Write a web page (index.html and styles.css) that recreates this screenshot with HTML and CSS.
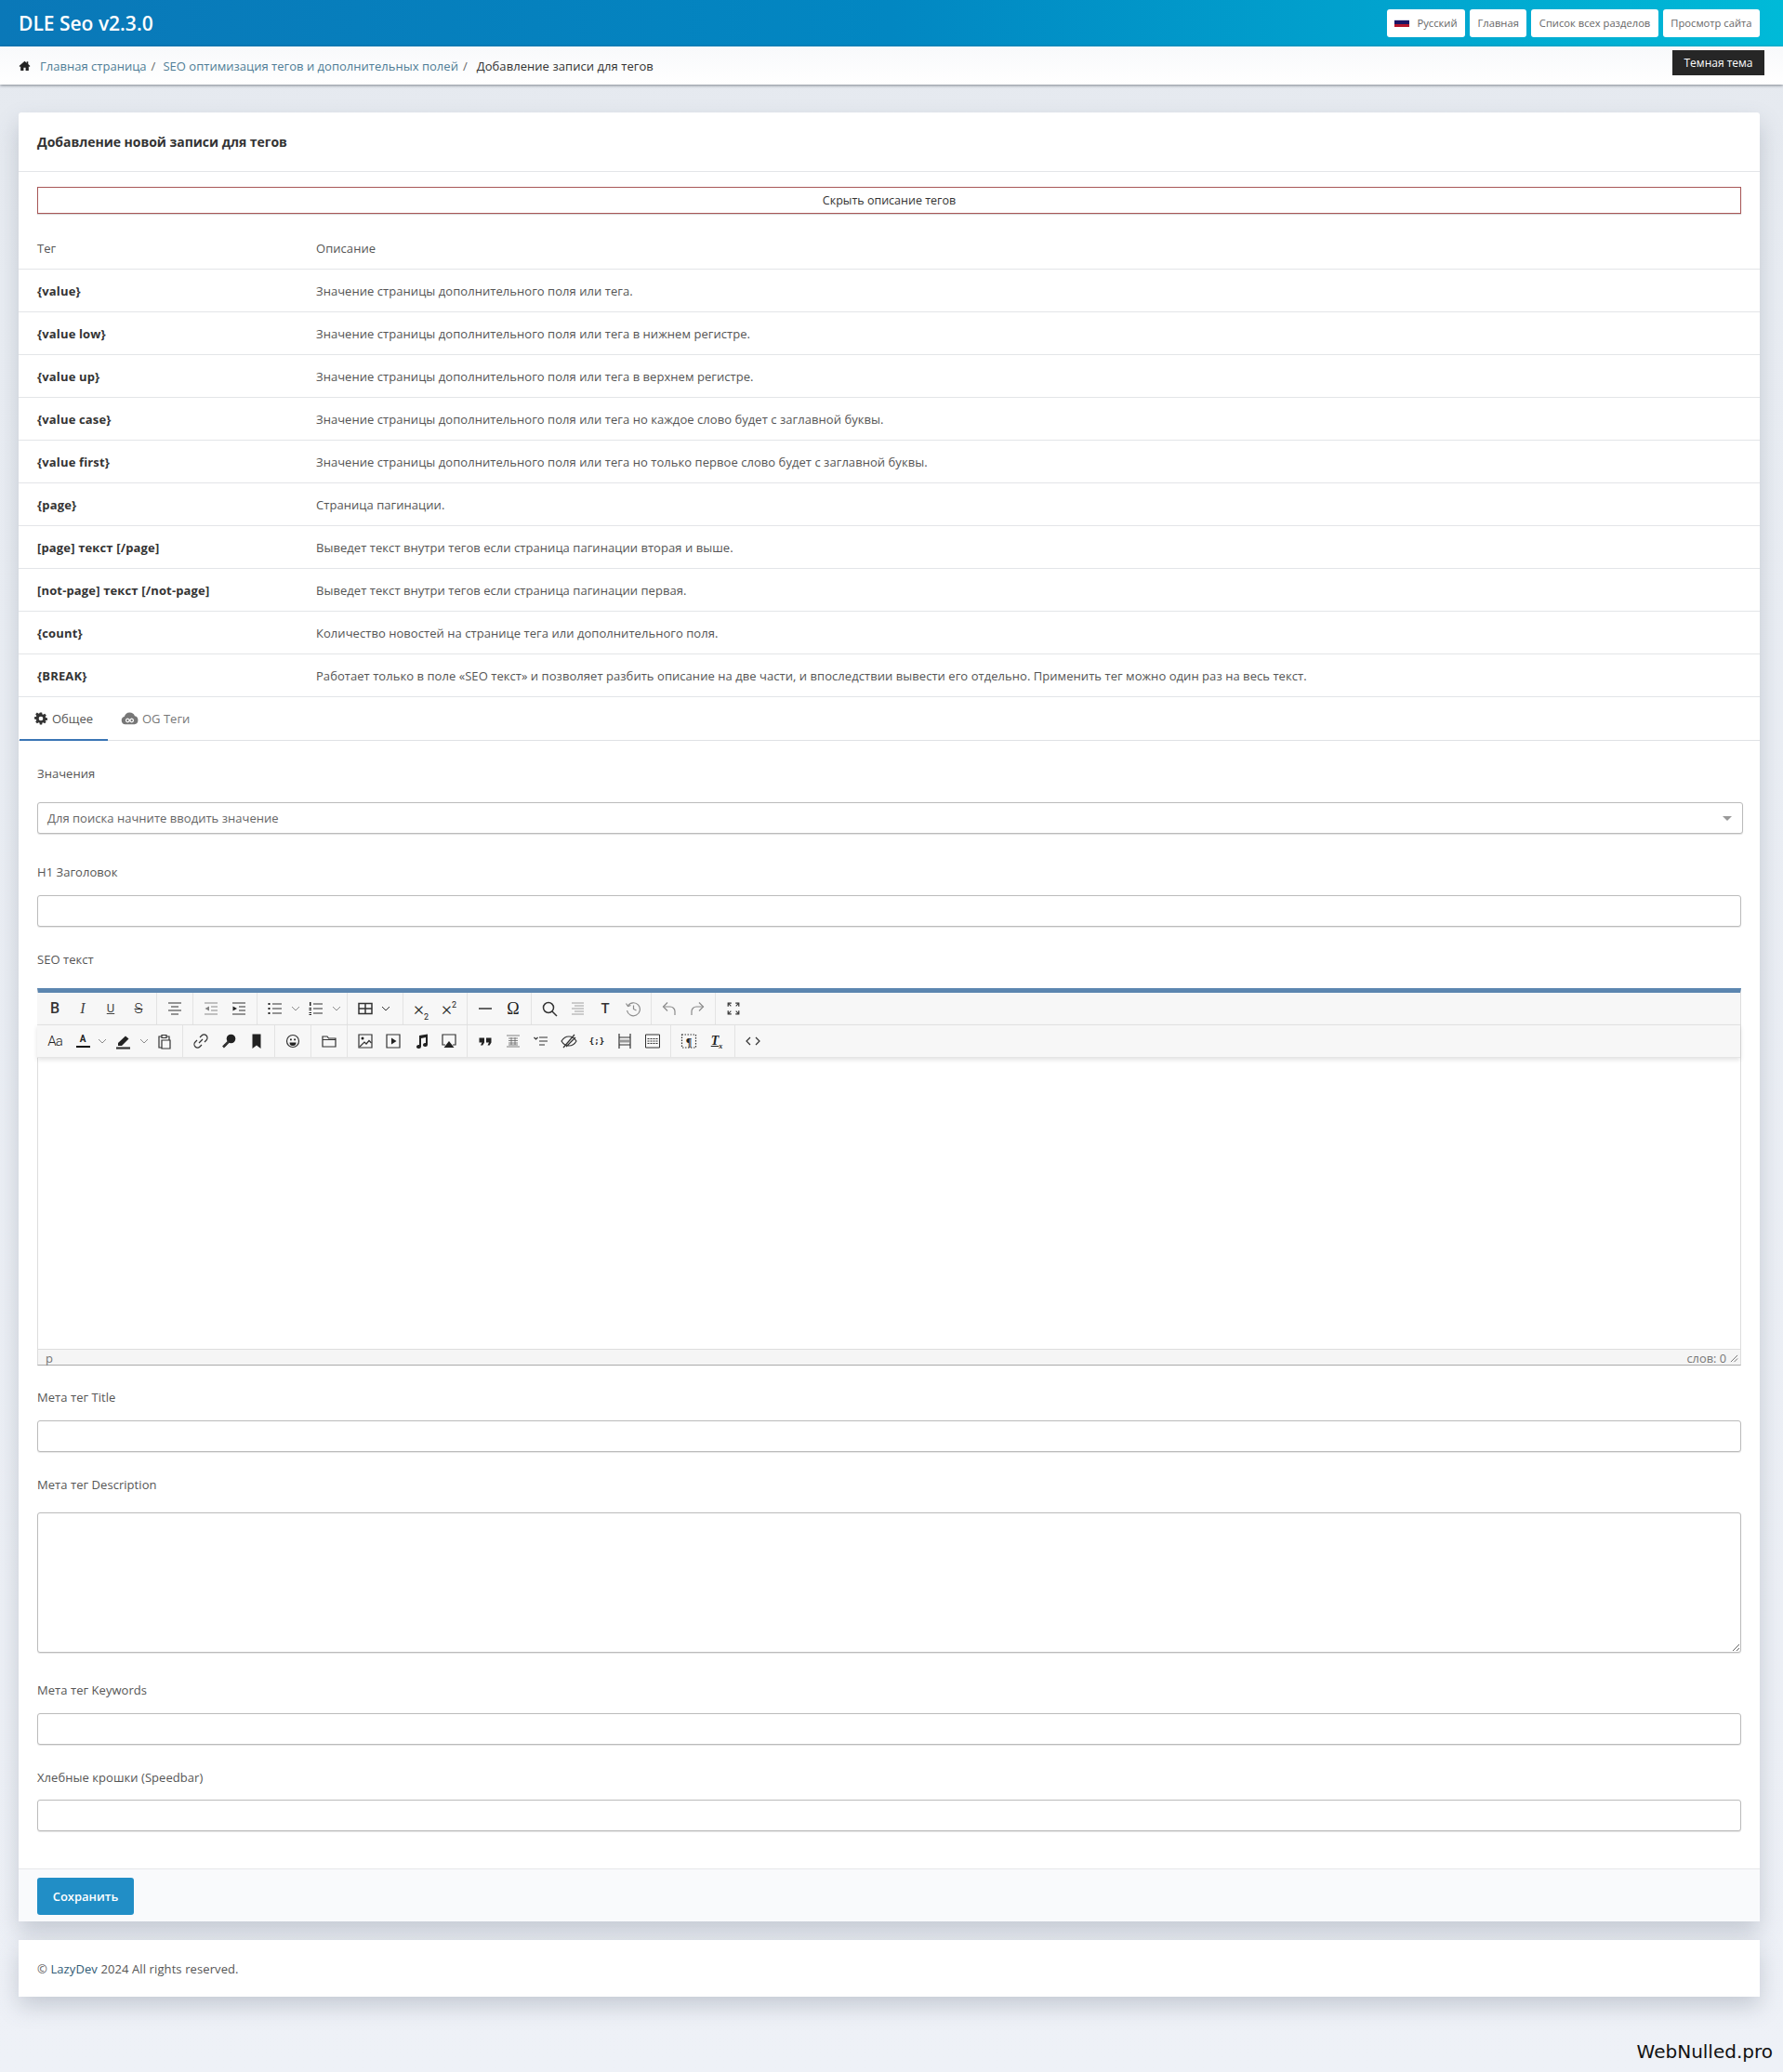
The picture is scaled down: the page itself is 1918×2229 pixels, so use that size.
FILE: index.html
```html
<!DOCTYPE html>
<html lang="ru">
<head>
<meta charset="utf-8">
<title>DLE Seo v2.3.0</title>
<link rel="stylesheet" href="styles.css">
</head>
<body>
<header class="topbar">
  <div class="brand">DLE Seo v2.3.0</div>
  <nav class="topnav">
    <a class="navbtn navlang"><svg class="flag" viewBox="0 0 16 8"><rect width="16" height="8" fill="#1b1464"/><rect width="16" height="1" fill="#d8d8e8"/><rect y="5" width="16" height="3" fill="#b5152b"/></svg><span>Русский</span></a>
    <a class="navbtn">Главная</a>
    <a class="navbtn">Список всех разделов</a>
    <a class="navbtn">Просмотр сайта</a>
  </nav>
</header>
<div class="crumbs">
  <div class="crumblist">
    <svg class="homeicon" viewBox="0 0 24 24"><path d="M12 3 1 13l1.600 1.700L4 13.500V22h6v-6h4v6h6v-8.500l1.400 1.200L23 13l-4-3.600V4h-3v2.700z" fill="#222"/></svg>
    <a class="crumblink">Главная страница</a><span class="slash">/</span>
    <a class="crumblink">SEO оптимизация тегов и дополнительных полей</a><span class="slash">/</span>
    <span class="crumbnow">Добавление записи для тегов</span>
  </div>
  <a class="darkbtn">Темная тема</a>
</div>

<main class="page">
  <section class="card">
    <h1 class="cardtitle">Добавление новой записи для тегов</h1>
    <div class="togglewrap"><button class="togglebtn">Скрыть описание тегов</button></div>
    <div class="tagtable">
      <div class="tagrow taghead"><div class="tagname">Тег</div><div>Описание</div></div>
      <div class="tagrow"><div class="tagname"><b>{value}</b></div><div>Значение страницы дополнительного поля или тега.</div></div>
      <div class="tagrow"><div class="tagname"><b>{value low}</b></div><div>Значение страницы дополнительного поля или тега в нижнем регистре.</div></div>
      <div class="tagrow"><div class="tagname"><b>{value up}</b></div><div>Значение страницы дополнительного поля или тега в верхнем регистре.</div></div>
      <div class="tagrow"><div class="tagname"><b>{value case}</b></div><div>Значение страницы дополнительного поля или тега но каждое слово будет с заглавной буквы.</div></div>
      <div class="tagrow"><div class="tagname"><b>{value first}</b></div><div>Значение страницы дополнительного поля или тега но только первое слово будет с заглавной буквы.</div></div>
      <div class="tagrow"><div class="tagname"><b>{page}</b></div><div>Страница пагинации.</div></div>
      <div class="tagrow"><div class="tagname"><b>[page] текст [/page]</b></div><div>Выведет текст внутри тегов если страница пагинации вторая и выше.</div></div>
      <div class="tagrow"><div class="tagname"><b>[not-page] текст [/not-page]</b></div><div>Выведет текст внутри тегов если страница пагинации первая.</div></div>
      <div class="tagrow"><div class="tagname"><b>{count}</b></div><div>Количество новостей на странице тега или дополнительного поля.</div></div>
      <div class="tagrow"><div class="tagname"><b>{BREAK}</b></div><div>Работает только в поле «SEO текст» и позволяет разбить описание на две части, и впоследствии вывести его отдельно. Применить тег можно один раз на весь текст.</div></div>
    </div>

    <div class="tabs">
      <a class="tab tabactive"><svg class="tabicon" viewBox="0 0 24 24"><path fill="#333" fill-rule="evenodd" d="M10 1h4l.6 3.200 1.700.7L19 3l3 3-1.900 2.700.7 1.700 3.200.6v4l-3.200.6-.7 1.700L22 18l-3 3-2.700-1.900-1.700.7L14 23h-4l-.6-3.200-1.700-.7L5 21l-3-3 1.900-2.700-.7-1.700L0 13V9l3.200-.6.700-1.700L2 4 5 1l2.700 1.900 1.700-.7zM12 8a4 4 0 1 0 0 8 4 4 0 0 0 0-8z"/></svg>Общее</a>
      <a class="tab"><svg class="tabicon tabicon-wide" viewBox="0 0 24 18"><path fill="#777" d="M6 17A5.500 5.500 0 0 1 4.800 6.200 7.500 7.500 0 0 1 19 5.600 5.800 5.800 0 0 1 18.500 17z"/><path fill="none" stroke="#fff" stroke-width="1.500" d="M11.500 11.500a2.300 2.300 0 1 0 0 .1zm5.600 0a2.300 2.300 0 1 0 0 .1z"/></svg>OG Теги</a>
    </div>

    <form class="formbody">
      <div class="field">
        <label class="label">Значения</label>
        <div class="selectbox"><span>Для поиска начните вводить значение</span><i class="caret"></i></div>
      </div>
      <div class="field field-h1">
        <label class="label">H1 Заголовок</label>
        <input class="input" type="text">
      </div>
      <div class="field field-seo">
        <label class="label">SEO текст</label>
        <div class="editor">
          <div class="toolrow">
            <div class="tgroup"><span class="tbtn glyph gb">B</span><span class="tbtn glyph gi">I</span><span class="tbtn glyph gu">U</span><span class="tbtn glyph gs">S</span></div>
            <div class="tgroup"><span class="tbtn"><svg class="ic" viewBox="0 0 18 18"><path d="M2 3h14M5 7h8M2 11h14M5 15h8"/></svg></span></div>
            <div class="tgroup"><span class="tbtn dim"><svg class="ic" viewBox="0 0 18 18"><path d="M2 3h14M9 7h7M9 11h7M2 15h14"/><path class="fillic" d="M7 6.500v5L2.500 9z"/></svg></span><span class="tbtn"><svg class="ic" viewBox="0 0 18 18"><path d="M2 3h14M9 7h7M9 11h7M2 15h14"/><path class="fillic" d="M2.500 6.500v5L7 9z"/></svg></span></div>
            <div class="tgroup"><span class="tbtn tdrop"><svg class="ic" viewBox="0 0 18 18"><path d="M6 4h10M6 9h10M6 14h10"/><path class="fillic" d="M1.500 3h2v2h-2zM1.500 8h2v2h-2zM1.500 13h2v2h-2z"/></svg><svg class="chev dim" viewBox="0 0 10 6"><path d="M1 1l4 4 4-4"/></svg></span><span class="tbtn tdrop"><svg class="ic" viewBox="0 0 18 18"><path d="M6 4h10M6 9h10M6 14h10"/><path class="fillic" d="M2 2h1.500v4H2zM1.500 8h2.500v1.200H1.500zM1.500 10h2.500v1H1.500zM1.500 13h2.500v1H1.500zM1.500 15h2.500v1H1.500z"/></svg><svg class="chev dim" viewBox="0 0 10 6"><path d="M1 1l4 4 4-4"/></svg></span></div>
            <div class="tgroup"><span class="tbtn tdrop twide"><svg class="ic ic-strong" viewBox="0 0 18 18"><path d="M2 3.500h14v11H2zM2 9h14M9 3.500v11"/></svg><svg class="chev" viewBox="0 0 10 6"><path d="M1 1l4 4 4-4"/></svg></span></div>
            <div class="tgroup"><span class="tbtn glyph gx"><span>×<sub>2</sub></span></span><span class="tbtn glyph gx"><span>×<sup>2</sup></span></span></div>
            <div class="tgroup"><span class="tbtn"><svg class="ic ic-strong" viewBox="0 0 18 18"><path d="M2 9h14"/></svg></span><span class="tbtn glyph gom">Ω</span></div>
            <div class="tgroup"><span class="tbtn"><svg class="ic ic-strong" viewBox="0 0 18 18"><circle cx="8" cy="8" r="5.500"/><path d="M12 12l5 5"/></svg></span><span class="tbtn dim"><svg class="ic ic-thin" viewBox="0 0 18 18"><path d="M3 3h13M6 6h10M3 9h13M6 12h10M3 15h13"/></svg></span><span class="tbtn glyph gt">T</span><span class="tbtn dim"><svg class="ic" viewBox="0 0 18 18"><path d="M3.500 6a7 7 0 1 1-1 5"/><path d="M1.500 3.500 3.500 6.500l3-1M9.500 5.500v4l3 1.500"/></svg></span></div>
            <div class="tgroup"><span class="tbtn dim"><svg class="ic" viewBox="0 0 18 18"><path d="M7 2.500 2.500 7 7 11.500"/><path d="M2.500 7H10a5 5 0 0 1 5 5v4"/></svg></span><span class="tbtn dim"><svg class="ic" viewBox="0 0 18 18"><path d="M11 2.500 15.500 7 11 11.500"/><path d="M15.500 7H8a5 5 0 0 0-5 5v4"/></svg></span></div>
            <div class="tgroup tlast"><span class="tbtn"><svg class="ic ic-full" viewBox="0 0 18 18"><path d="M2.500 6.500v-4h4M11.500 2.500h4v4M15.500 11.500v4h-4M6.500 15.500h-4v-4"/><path d="M3 3l3 3M15 3l-3 3M15 15l-3-3M3 15l3-3" stroke-width="1.200"/></svg></span></div>
          </div>
          <div class="toolrow toolrow-low">
            <div class="tgroup"><span class="tbtn glyph gaa">Aa</span><span class="tbtn tdrop"><span class="colorwrap"><span class="colorA">A</span><i class="colorbar"></i></span><svg class="chev dim" viewBox="0 0 10 6"><path d="M1 1l4 4 4-4"/></svg></span><span class="tbtn tdrop"><svg class="ic" viewBox="0 0 18 18"><path class="fillic" d="M3 11 11 3.500 14.500 6.500 7 14H3z"/><path d="M1 16.500h15" stroke-width="2.200"/></svg><svg class="chev dim" viewBox="0 0 10 6"><path d="M1 1l4 4 4-4"/></svg></span><span class="tbtn"><svg class="ic" viewBox="0 0 18 18"><path d="M6 4H3v12h3M6 2.500h5v3H6zM6 8h9v9H6zM11 4h3v4"/></svg></span></div>
            <div class="tgroup"><span class="tbtn"><svg class="ic" viewBox="0 0 18 18"><path d="M7 11l4-4M8 5l2-2a3 3 0 0 1 5 5l-2 2M10 13l-2 2a3 3 0 0 1-5-5l2-2"/></svg></span><span class="tbtn"><svg class="ic" viewBox="0 0 18 18"><circle class="fillic" cx="11.500" cy="6.500" r="4.800"/><path d="M9 9.500 3 15.500" stroke-width="2.600"/><path d="M4.500 12.500l1.500 1.500" stroke-width="1.800"/></svg></span><span class="tbtn"><svg class="ic" viewBox="0 0 18 18"><path class="fillic" d="M4.500 1.500h9V17L9 13.500 4.500 17z"/></svg></span></div>
            <div class="tgroup"><span class="tbtn"><svg class="ic" viewBox="0 0 18 18"><circle cx="9" cy="9" r="6.500"/><path class="fillic" d="M6 6.500h1.800v1.800H6zM10.200 6.500H12v1.800h-1.800zM5.500 10.500h7a3.500 3.500 0 0 1-7 0z"/></svg></span></div>
            <div class="tgroup"><span class="tbtn"><svg class="ic" viewBox="0 0 18 18"><path d="M2 4h5l1.500 2H16v9H2zM2 7.500h14"/></svg></span></div>
            <div class="tgroup"><span class="tbtn"><svg class="ic" viewBox="0 0 18 18"><path d="M2 2h14v14H2z"/><path d="M3 15l5-5 2 2 3-3.500 2.500 2.500"/><circle class="fillic" cx="6" cy="6" r="1.500"/></svg></span><span class="tbtn"><svg class="ic" viewBox="0 0 18 18"><path d="M2 2h14v14H2z"/><path class="fillic" d="M7 5.500 12.500 9 7 12.500z"/></svg></span><span class="tbtn"><svg class="ic" viewBox="0 0 18 18"><path class="fillic" d="M7 3l9-1.500v11.500a2.500 2 0 1 1-2-2V5l-5 1v9a2.500 2 0 1 1-2-2z"/></svg></span><span class="tbtn"><svg class="ic" viewBox="0 0 18 18"><path d="M5 13H2V2h14v11h-3"/><path class="fillic" d="M9 9l5.500 7h-11z"/></svg></span></div>
            <div class="tgroup"><span class="tbtn"><svg class="ic" viewBox="0 0 18 18"><path class="fillic" d="M2.500 5.500h5.500v5L6.200 13.500H4l1.500-3H2.500zM10 5.500h5.500v5l-1.800 3h-2.200l1.500-3h-3z"/></svg></span><span class="tbtn dim2"><svg class="ic ic-thin" viewBox="0 0 18 18"><path d="M2 3h14M2 15h14M4 6h10M4 8.500h10M4 11h10M4 13h10M7 5v8M11 5v8"/></svg></span><span class="tbtn"><svg class="ic" viewBox="0 0 18 18"><path d="M7 5h9M7 9h9M7 13h6"/><path d="M1.500 5l2 2 2-2"/></svg></span><span class="tbtn"><svg class="ic" viewBox="0 0 18 18"><path d="M1 9s3-5 8-5 8 5 8 5-3 5-8 5-8-5-8-5zM3 16 15 2M6 15 16 5"/></svg></span><span class="tbtn glyph gcurly">{;}</span><span class="tbtn"><svg class="ic" viewBox="0 0 18 18"><path d="M3 1v16M15 1v16M3 5h12M3 13h12"/><path class="thinline" d="M4 9h10"/></svg></span><span class="tbtn"><svg class="ic ic-box" viewBox="0 0 18 18"><path d="M1.500 2h15v14h-15z"/><path stroke-dasharray="2 1" d="M3.500 6.500h11M3.500 9h11M3.500 11.500h11"/></svg></span></div>
            <div class="tgroup"><span class="tbtn"><svg class="ic" viewBox="0 0 18 18"><path stroke-dasharray="1.500 1.500" d="M1.500 2h15v14h-15z"/><text class="pil" x="9" y="13.500" text-anchor="middle">¶</text></svg></span><span class="tbtn glyph gclear"><span><u>T</u><sub>x</sub></span></span></div>
            <div class="tgroup tlast"><span class="tbtn"><svg class="ic" viewBox="0 0 18 18"><path d="M6 5 2 9l4 4M12 5l4 4-4 4"/></svg></span></div>
          </div>
          <div class="editarea"></div>
          <div class="statusbar"><span class="statp">p</span><span class="statwords">слов: 0<svg class="grip" viewBox="0 0 10 10"><path d="M1 9 9 1M5 9l4-4"/></svg></span></div>
        </div>
      </div>
      <div class="field field-title">
        <label class="label">Мета тег Title</label>
        <input class="input" type="text">
      </div>
      <div class="field field-desc">
        <label class="label">Мета тег Description</label>
        <textarea class="input textarea"></textarea>
      </div>
      <div class="field field-keys">
        <label class="label">Мета тег Keywords</label>
        <input class="input" type="text">
      </div>
      <div class="field field-bar">
        <label class="label">Хлебные крошки (Speedbar)</label>
        <input class="input" type="text">
      </div>
    </form>
    <div class="cardfoot"><button class="savebtn">Сохранить</button></div>
  </section>
  <footer class="sitefoot">© <a class="footlink">LazyDev</a> 2024 All rights reserved.</footer>
  <div class="watermark">WebNulled.pro</div>
</main>
</body>
</html>
```

FILE: styles.css
```css
* { box-sizing: border-box; }
html, body { margin: 0; padding: 0; }
body {
  height: 2229px;
  background: linear-gradient(#e4e8ee 0, #e9edf3 300px, #eef1f7 100%);
  font: 13px/18px "Open Sans", "Noto Sans", sans-serif;
  color: #333;
  overflow: hidden;
}
a { text-decoration: none; }
.topbar {
  height: 50px;
  display: flex;
  align-items: center;
  justify-content: space-between;
  padding: 0 25px 0 20px;
  background: linear-gradient(90deg, #0a78b8 0%, #0287c2 50%, #00bad8 100%);
}
.brand { font-size: 21px; font-weight: 600; color: #fff; }
.topnav { display: flex; gap: 5px; }
.navbtn {
  height: 30px;
  display: flex;
  align-items: center;
  padding: 0 8.500px 1px;
  background: #fff;
  border-radius: 3px;
  font-size: 11.200px;
  color: #666;
}
.navlang { gap: 8px; padding-left: 8px; }
.flag { width: 16px; height: 8px; }
.crumbs {
  height: 41px;
  display: flex;
  justify-content: space-between;
  padding: 4px 20px 0;
  background: linear-gradient(#f8f9fb, #fff);
  box-shadow: 0 1px 3px rgba(40, 50, 60, .55);
  position: relative;
}
.crumblist { display: flex; align-items: center; height: 33px; font-size: 13px; letter-spacing: .02px; }
.homeicon { width: 13px; height: 13px; margin-right: 10px; }
.crumblink { color: #4f7d96; }
.slash { margin: 0 8px 0 5px; color: #666; }
.crumbnow { color: #333; margin-left: 2px; letter-spacing: .06px; }
.darkbtn {
  height: 27px;
  width: 99px;
  display: flex;
  align-items: center;
  justify-content: center;
  background: #262626;
  color: #fff;
  font-size: 12px;
}
.page { padding: 30px 25px 0 20px; }
.card {
  background: #fff;
  border-radius: 3px;
  box-shadow: 0 12px 24px rgba(90, 100, 120, .28);
}
.cardtitle {
  margin: 0;
  height: 64px;
  padding: 0 20px;
  display: flex;
  align-items: center;
  border-bottom: 1px solid #e3e5e8;
  font-size: 14px;
  font-weight: 700;
  letter-spacing: -.03px;
  color: #333;
}
.togglewrap { padding: 16px 20px 0; }
.togglebtn {
  display: block;
  width: 100%;
  height: 29px;
  padding: 0;
  background: #fff;
  border: 1px solid #a85757;
  box-shadow: 0 1px 1px rgba(0, 0, 0, .15);
  font: 12.500px "Open Sans", "Noto Sans", sans-serif;
  color: #333;
}
.tagtable { margin-top: 14px; }
.tagrow {
  height: 46px;
  display: flex;
  align-items: center;
  padding: 1px 20px 0;
  border-bottom: 1px solid #e3e5e8;
  font-size: 13px;
  letter-spacing: .05px;
  color: #555;
}
.tagrow b { color: #333; letter-spacing: .15px; }
.tagname { width: 300px; flex: none; }
.tabs {
  height: 47px;
  display: flex;
  border-bottom: 1px solid #dfe1e4;
}
.tab {
  height: 46px;
  display: flex;
  align-items: center;
  padding: 0 15px 0 14px;
  font-size: 13px;
  color: #777;
  gap: 4px;
}
.tabactive { color: #555; border-bottom: 2px solid #3a75b5; margin-left: 1px; width: 95px; margin-bottom: -1px; height: 47px; padding-left: 16px; gap: 5px; }
.tabicon { width: 14px; height: 14px; }
.tabicon-wide { width: 19px; height: 14px; }
.formbody { padding: 0 20px; }
.field { display: block; }
.label { display: block; font-size: 13px; line-height: 18px; letter-spacing: .05px; color: #555; padding-top: 26px; }
.selectbox {
  width: 1835px;
  height: 34px;
  margin-top: 22px;
  display: flex;
  align-items: center;
  justify-content: space-between;
  padding: 0 11px 0 10px;
  background: #fff;
  border: 1px solid #bbb;
  border-radius: 3px;
  box-shadow: 0 1px 1px rgba(0, 0, 0, .12);
  font-size: 13px;
  letter-spacing: .03px;
  color: #666;
}
.caret { width: 0; height: 0; border: 5px solid transparent; border-top-color: #999; border-bottom: 0; }
.input {
  display: block;
  width: 100%;
  height: 34px;
  margin-top: 15px;
  background: #fff;
  border: 1px solid #bbb;
  border-radius: 3px;
  box-shadow: 0 1px 1px rgba(0, 0, 0, .1);
  outline: 0;
}
.field-h1 .label { padding-top: 32px; }
.field-h1 .input { margin-top: 16px; }
.field-seo .label { padding-top: 26px; }
.editor {
  margin-top: 22px;
  border-top: 5px solid #5c86b0;
  border-left: 1px solid #ddd;
  border-right: 1px solid #ddd;
  border-bottom: 1px solid #aaa;
  background: #fff;
}
.toolrow {
  display: flex;
  margin-left: -1px;
  height: 35px;
  background: #f7f7f7;
  border-bottom: 1px solid #e5e5e5;
}
.toolrow-low { box-shadow: 0 2px 5px rgba(0, 0, 0, .12); position: relative; }
.tgroup { display: flex; padding: 0 4px; border-right: 1px solid #e3e3e3; }
.tlast { border-right: 0; }
.tbtn {
  width: 30px;
  height: 34px;
  flex: none;
  display: flex;
  align-items: center;
  justify-content: center;
  color: #222;
}
.tdrop { width: 44px; justify-content: flex-start; padding-left: 6px; gap: 8px; }
.twide { width: 51px; }
.dim { color: #888; }
.dim .ic, .chev.dim { opacity: .55; }
.dim2 .ic { opacity: .75; }
.ic { width: 18px; height: 18px; fill: none; stroke: #333; stroke-width: 1.200; flex: none; }
.ic-strong { stroke-width: 1.500; }
.ic-full { stroke-width: 1.400; width: 16px; height: 16px; }
.ic-thin { stroke-width: .8; }
.ic-box { stroke-width: 1; }
.fillic { fill: #222; stroke: none; }
.thinline { stroke-width: 3; stroke: #999; }
.pil { font: 700 12px "Liberation Serif", serif; fill: #222; stroke: none; }
.chev { width: 10px; height: 6px; fill: none; stroke: #333; stroke-width: 1; flex: none; }
.glyph { font-family: "Roboto", "Liberation Sans", sans-serif; font-size: 16px; }
.gb { font-weight: 500; color: #333; }
.gi { font-family: "Liberation Serif", serif; font-style: italic; color: #444; }
.gu { text-decoration: underline; font-size: 13px; color: #444; }
.gs { text-decoration: line-through; font-size: 15px; font-weight: 300; }
.gx { font-size: 21px; font-weight: 300; line-height: 20px; }
.gx sub, .gx sup { font-size: 9px; line-height: 0; font-weight: 400; }
.gclear sub { font-size: 8px; line-height: 0; }
.gom { font-size: 18px; font-family: "Liberation Serif", serif; }
.gt { font-size: 15px; font-weight: 500; color: #333; }
.gaa { font-size: 15px; font-weight: 300; letter-spacing: -1px; }
.gcurly { font: 700 9px "DejaVu Sans Mono", monospace; }
.gclear { font: italic 700 14px "Liberation Serif", serif; }
.colorwrap { width: 16px; height: 18px; display: flex; flex-direction: column; align-items: center; flex: none; margin-left: 1px; }
.colorA { font: 700 10px/13px "Roboto", sans-serif; height: 14px; }
.colorbar { width: 15px; height: 2px; background: #111; }
.editarea { height: 313px; background: #fff; }
.statusbar {
  height: 17px;
  display: flex;
  justify-content: space-between;
  align-items: flex-end;
  padding: 0 2px 0 8px;
  background: #f5f5f5;
  border-top: 1px solid #ddd;
  font-size: 12.800px;
  line-height: 14px;
  color: #777;
}
.statp { font-size: 13px; }
.statwords { display: flex; align-items: center; gap: 4px; }
.grip { width: 9px; height: 9px; fill: none; stroke: #777; stroke-width: 1.100; }
.field-title .label { padding-top: 25px; }
.field-title .input { margin-top: 16px; }
.field-desc .label { padding-top: 26px; }
.textarea { height: 151px; margin-top: 21px; resize: vertical; }
.field-keys .label { padding-top: 31px; }
.field-keys .input { margin-top: 16px; }
.field-bar .label { padding-top: 26px; }
.cardfoot {
  margin-top: 40px;
  height: 57px;
  padding: 9px 20px 0;
  background: #f9fafc;
  border-top: 1px solid #e6e7ea;
}
.savebtn {
  display: block;
  width: 104px;
  height: 40px;
  padding: 0;
  background: #218ec6;
  border: 0;
  border-radius: 3px;
  font: 600 13px "Open Sans", "Noto Sans", sans-serif;
  color: #fff;
}
.sitefoot {
  margin-top: 20px;
  height: 61px;
  display: block;
  padding: 22px 20px 0;
  background: #fff;
  box-shadow: 0 10px 24px rgba(90, 100, 120, .28);
  font-size: 13px;
  letter-spacing: .1px;
  color: #555;
}
.footlink { color: #2f5a75; }
.watermark {
  margin: 47px -14px 0 0;
  text-align: right;
  font: 20px/24px "DejaVu Sans", sans-serif;
  color: #111;
}
```
